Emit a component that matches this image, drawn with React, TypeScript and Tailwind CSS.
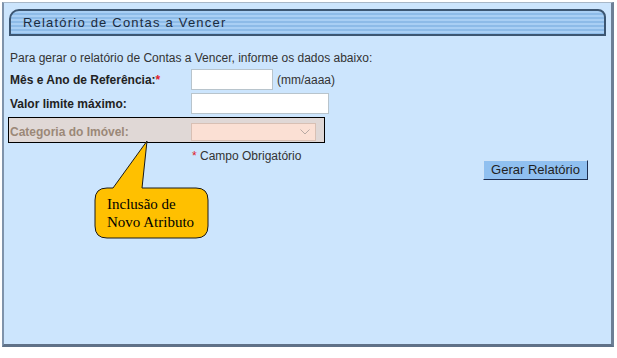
import React from "react";

const Req = () => <span className="text-[#e0202a]">*</span>;

export default function App() {
  return (
    <div className="relative w-[617px] h-[358px] bg-white font-['Liberation_Sans',Arial,sans-serif]">
      <div className="ml-[2px] pt-[2px] w-[612px]">
        <div className="h-[345px] bg-[#cce5fd] border-l-[2px] border-t-[1px] border-r-[3px] border-b-[3px] border-l-[#7f93ab] border-t-[#a8b8c8] border-r-[#6d7f96] border-b-[#5f7188] pt-[6px] px-[5px]">
          {/* Title bar */}
          <div className="h-[27px] border-[2px] border-[#3c5672] rounded-tl-[10px] rounded-tr-[8px] bg-[repeating-linear-gradient(to_bottom,#a9cff4_0px,#a9cff4_2px,#8dbbe8_2px,#8dbbe8_4px)] flex items-center pl-[12px]">
            <span className="text-[13px] tracking-[1.2px] text-[#1c2c3e]">Relatório de Contas a Vencer</span>
          </div>

          <div className="pt-[14px] text-[12px] text-[#333]">
            <p className="pl-[1px] leading-[16px]">Para gerar o relatório de Contas a Vencer, informe os dados abaixo:</p>

            <div className="flex items-center mt-[3px] h-[21px]">
              <span className="w-[182px] pl-[1px] font-bold text-[#222]">
                Mês e Ano de Referência:<Req />
              </span>
              <div className="w-[82px] h-[21px] bg-white border border-[#b8c4cc]" />
              <span className="ml-[4px] text-[#333]">(mm/aaaa)</span>
            </div>

            <div className="flex items-center mt-[3px] h-[21px]">
              <span className="w-[182px] pl-[1px] font-bold text-[#222]">Valor limite máximo:</span>
              <div className="w-[138px] h-[21px] bg-white border border-[#b8c4cc]" />
            </div>

            <div className="flex items-center mt-[3px] -ml-[1px] w-[317px] h-[26px] border border-black bg-[#e0d8d6] pt-[4px]">
              <span className="w-[182px] pl-[1px] font-bold text-[#9b8878]">Categoria do Imóvel:</span>
              <div className="w-[125px] h-[18px] bg-[#fbe0d4] border border-[#d8c0b4] flex items-center justify-end pr-[5px]">
                <svg width="10" height="6" viewBox="0 0 10 6" fill="none" stroke="#b8aaa4" strokeWidth="1">
                  <path d="M0.5 0.5 L5 5 L9.5 0.5" />
                </svg>
              </div>
            </div>

            <div className="flex items-start mt-[5px]">
              <div className="w-[183px]" />
              <span className="text-[12px] leading-[16px] text-[#333]">
                <Req /> Campo Obrigatório
              </span>
              <div className="flex-1 flex justify-end pr-[18px] pt-[12px]">
                <button className="h-[20px] w-[105px] bg-[#90c0f0] border border-t-[#d0e4f8] border-l-[#d0e4f8] border-r-[#1e2e50] border-b-[#1e2e50] text-[13px] text-[#222] leading-[16px]">
                  Gerar Relatório
                </button>
              </div>
            </div>
          </div>
        </div>
      </div>

      {/* Callout annotation */}
      <svg className="absolute left-0 top-0" width="617" height="358" viewBox="0 0 617 358">
        <path
          d="M107 188 L113 188 L147 141 L142 188 L196 188 Q208 188 208 200 L208 226 Q208 238 196 238 L107 238 Q95 238 95 226 L95 200 Q95 188 107 188 Z"
          fill="#ffc000"
          stroke="#1a1a1a"
          strokeWidth="1"
        />
      </svg>
      <div className="absolute left-[107px] top-[195px] font-['Liberation_Serif',serif] text-[15px] leading-[18px] text-black">
        Inclusão de
        <br />
        Novo Atributo
      </div>
    </div>
  );
}
